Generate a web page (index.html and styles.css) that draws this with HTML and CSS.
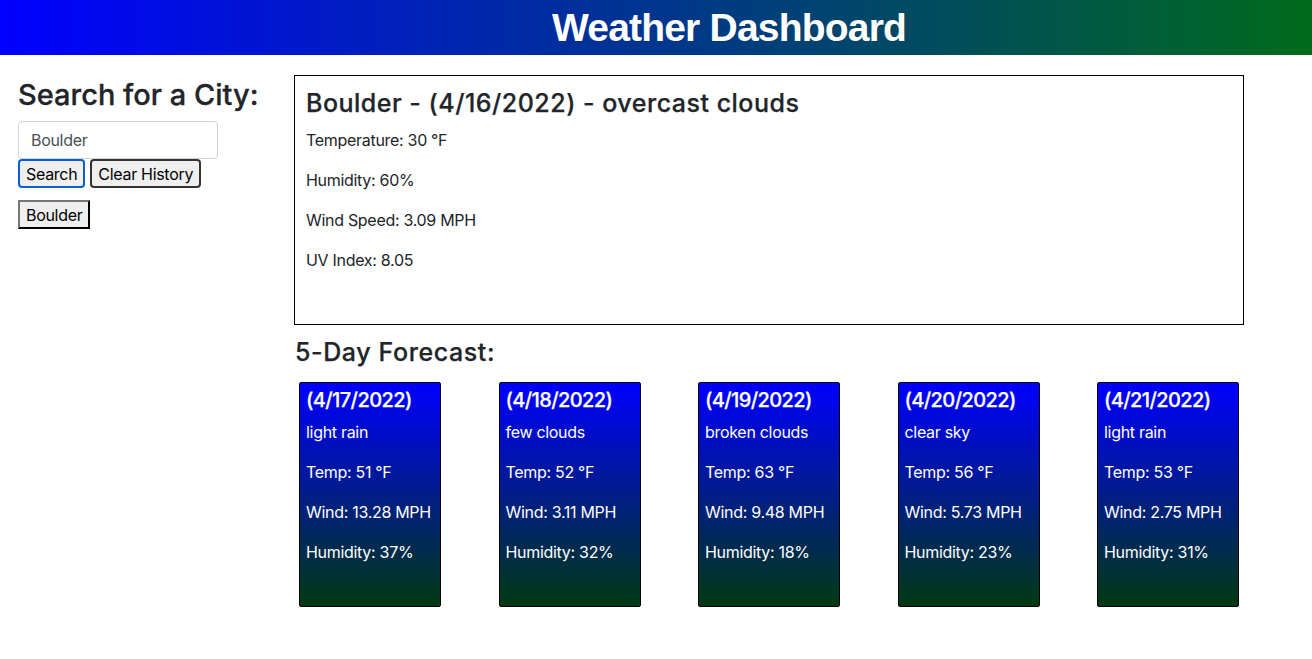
FILE: index.html
```html
<!DOCTYPE html>
<html lang="en">
<head>
<meta charset="utf-8">
<title>Weather Dashboard</title>
<link rel="stylesheet" href="styles.css">
</head>
<body>
<header class="header">
  <h1 class="header-title">Weather Dashboard</h1>
</header>
<div class="page">
  <aside class="sidebar">
    <h3 class="search-title">Search for a City:</h3>
    <input class="city-input" type="text" value="Boulder">
    <div class="btn-row">
      <button class="btn btn-search">Search</button>
      <button class="btn btn-clear">Clear History</button>
    </div>
    <div class="history">
      <button class="history-btn">Boulder</button>
    </div>
  </aside>
  <main class="main">
    <section class="current">
      <h4 class="current-title">Boulder - (4/16/2022) - overcast clouds</h4>
      <p>Temperature: 30 °F</p>
      <p>Humidity: 60%</p>
      <p>Wind Speed: 3.09 MPH</p>
      <p>UV Index: 8.05</p>
    </section>
    <h4 class="forecast-title">5-Day Forecast:</h4>
    <div class="forecast">
      <div class="slot"><div class="card">
        <h5 class="card-date">(4/17/2022)</h5>
        <p>light rain</p><p>Temp: 51 °F</p><p>Wind: 13.28 MPH</p><p>Humidity: 37%</p>
      </div></div>
      <div class="slot"><div class="card">
        <h5 class="card-date">(4/18/2022)</h5>
        <p>few clouds</p><p>Temp: 52 °F</p><p>Wind: 3.11 MPH</p><p>Humidity: 32%</p>
      </div></div>
      <div class="slot"><div class="card">
        <h5 class="card-date">(4/19/2022)</h5>
        <p>broken clouds</p><p>Temp: 63 °F</p><p>Wind: 9.48 MPH</p><p>Humidity: 18%</p>
      </div></div>
      <div class="slot"><div class="card">
        <h5 class="card-date">(4/20/2022)</h5>
        <p>clear sky</p><p>Temp: 56 °F</p><p>Wind: 5.73 MPH</p><p>Humidity: 23%</p>
      </div></div>
      <div class="slot"><div class="card">
        <h5 class="card-date">(4/21/2022)</h5>
        <p>light rain</p><p>Temp: 53 °F</p><p>Wind: 2.75 MPH</p><p>Humidity: 31%</p>
      </div></div>
    </div>
  </main>
</div>
</body>
</html>
```
FILE: styles.css
```css
* { box-sizing: border-box; }
body {
  margin: 0;
  font-family: Inter, "Noto Sans", "Liberation Sans", sans-serif;
  font-size: 16px;
  line-height: 24px;
  color: #212529;
  background: #fff;
}
p { margin: 0 0 16px 0; letter-spacing: -0.3px; }
.header {
  height: 55px;
  background: linear-gradient(to right, #0000ff, #006b1c);
  display: flex;
  align-items: center;
  justify-content: center;
}
.header-title {
  margin: 0;
  padding-left: 146px;
  font-family: "Liberation Sans", Arial, sans-serif;
  font-weight: 700;
  font-size: 39px;
  line-height: 46px;
  color: #fff;
  letter-spacing: -0.8px;
}
.page {
  display: flex;
  padding-top: 20px;
}
.sidebar {
  width: 294px;
  padding-left: 18px;
  padding-top: 1px;
  flex-shrink: 0;
}
.search-title {
  margin: 0 0 7px 0;
  font-size: 29px;
  line-height: 38px;
  font-weight: 500;
  letter-spacing: 0;
  -webkit-text-stroke: 0.3px currentColor;
}
.city-input {
  display: block;
  width: 200px;
  height: 38px;
  padding: 6px 12px;
  font-family: inherit;
  font-size: 16px;
  color: #495057;
  border: 1px solid #ced4da;
  border-radius: 4px;
  margin: 0;
  letter-spacing: -0.3px;
}
.btn-row { display: flex; gap: 5px; }
.btn {
  font-family: inherit;
  font-size: 16px;
  line-height: 20px;
  height: 29px;
  padding: 2px 6px;
  background: #efefef;
  color: #000;
  border-radius: 4px;
  letter-spacing: -0.3px;
}
.btn-search { border: 2px solid #0b5ed7; }
.btn-clear { border: 2px solid #333; }
.history { margin-top: 12px; }
.history-btn {
  font-family: inherit;
  font-size: 16px;
  line-height: 20px;
  height: 29px;
  padding: 2px 6px;
  background: #efefef;
  color: #000;
  border: 2px outset #767676;
  border-right-color: #222;
  border-bottom-color: #222;
  border-radius: 0;
  letter-spacing: -0.3px;
}
.main { width: 950px; flex-shrink: 0; }
.current {
  height: 250px;
  border: 1px solid #000;
  padding: 13px 11px;
}
.current-title {
  margin: 0 0 10px 0;
  font-size: 25px;
  line-height: 29px;
  font-weight: 500;
  letter-spacing: 0.5px;
  -webkit-text-stroke: 0.25px currentColor;
}
.forecast-title {
  margin: 13px 0 15px 1px;
  font-size: 25px;
  line-height: 29px;
  font-weight: 500;
  letter-spacing: 0.6px;
  -webkit-text-stroke: 0.25px currentColor;
}
.forecast {
  display: grid;
  grid-template-columns: repeat(5, 199.5px);
}
.slot { padding-left: 5px; }
.card {
  width: 142px;
  height: 225px;
  border: 1px solid #000;
  border-radius: 2px;
  padding: 5px 6px;
  color: #fff;
  background: linear-gradient(to bottom, #0000ff, #003a12);
}
.card-date {
  margin: 0 0 8px 0;
  font-size: 20px;
  line-height: 24px;
  font-weight: 500;
  letter-spacing: -0.6px;
  -webkit-text-stroke: 0.25px currentColor;
}
```
